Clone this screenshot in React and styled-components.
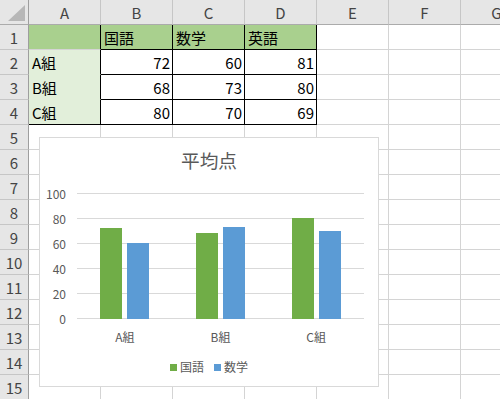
import styled, { createGlobalStyle } from "styled-components";

const GlobalStyle = createGlobalStyle`
  html, body {
    margin: 0;
    padding: 0;
    background: #ffffff;
    overflow: hidden;
  }
  body {
    font-family: "Noto Sans CJK JP", "Noto Sans", sans-serif;
  }
`;

const columns = ["A", "B", "C", "D", "E", "F", "G"];
const rowCount = 15;

const scores = [
  { name: "A組", kokugo: 72, sugaku: 60, eigo: 81 },
  { name: "B組", kokugo: 68, sugaku: 73, eigo: 80 },
  { name: "C組", kokugo: 80, sugaku: 70, eigo: 69 },
];

const GREEN = "#70ad47";
const BLUE = "#5b9bd5";

// what goes in each cell of the table area (row, col index 0 = A)
function cellFor(row, col) {
  const black = "#000000";
  const grid = "#d4d4d4";
  const cell = { text: "", bg: "#ffffff", align: "left", right: grid, bottom: grid };

  if (row === 1 && col <= 3) {
    cell.bg = "#a9d08e";
    cell.text = ["", "国語", "数学", "英語"][col];
    cell.right = black;
    if (col > 0) cell.bottom = black;
  }
  if (row >= 2 && row <= 4 && col <= 3) {
    const s = scores[row - 2];
    if (col === 0) {
      cell.bg = "#e2efda";
      cell.text = s.name;
      cell.right = black;
      cell.bottom = row === 4 ? black : "#e2efda";
    } else {
      cell.text = [s.kokugo, s.sugaku, s.eigo][col - 1];
      cell.align = "right";
      cell.right = black;
      cell.bottom = black;
    }
  }
  return cell;
}

export default function App() {
  const rows = [];
  for (let r = 1; r <= rowCount; r++) {
    rows.push(
      <RowHeader key={`h${r}`}>{r}</RowHeader>
    );
    columns.forEach((c, i) => {
      const cell = cellFor(r, i);
      rows.push(
        <Cell
          key={`${c}${r}`}
          $bg={cell.bg}
          $align={cell.align}
          $right={cell.right}
          $bottom={cell.bottom}
        >
          {cell.text}
        </Cell>
      );
    });
  }

  return (
    <>
      <GlobalStyle />
      <Sheet>
        <Corner />
        {columns.map((c) => (
          <ColumnHeader key={c}>{c}</ColumnHeader>
        ))}
        {rows}

        <Chart>
          <ChartTitle>平均点</ChartTitle>
          <PlotRow>
            <AxisLabels>
              {[100, 80, 60, 40, 20, 0].map((v) => (
                <AxisLabel key={v}>{v}</AxisLabel>
              ))}
            </AxisLabels>
            <PlotArea>
              {scores.map((s) => (
                <BarGroup key={s.name}>
                  <Bar $color={GREEN} style={{ height: s.kokugo * 1.25 + 1 }} />
                  <Bar $color={BLUE} style={{ height: s.sugaku * 1.25 + 1 }} />
                </BarGroup>
              ))}
            </PlotArea>
          </PlotRow>
          <Categories>
            {scores.map((s) => (
              <Category key={s.name}>{s.name}</Category>
            ))}
          </Categories>
          <Legend>
            <LegendItem>
              <Swatch $color={GREEN} />
              国語
            </LegendItem>
            <LegendItem>
              <Swatch $color={BLUE} />
              数学
            </LegendItem>
          </Legend>
        </Chart>
      </Sheet>
    </>
  );
}

const Sheet = styled.div`
  position: relative;
  width: 500px;
  height: 399px;
  overflow: hidden;
  display: grid;
  grid-template-columns: 29px repeat(7, 72px);
  grid-auto-rows: 25px;
  font-size: 15px;
  color: #000000;
`;

const HeaderBase = styled.div`
  box-sizing: border-box;
  background: #e6e6e6;
  color: #444444;
  display: flex;
  align-items: center;
  justify-content: center;
`;

const Corner = styled(HeaderBase)`
  position: relative;
  border-right: 1px solid #9e9e9e;
  border-bottom: 1px solid #ababab;

  &::after {
    content: "";
    position: absolute;
    left: 8px;
    top: 5px;
    width: 17px;
    height: 16px;
    background: #b7b7b7;
    clip-path: polygon(100% 0, 100% 100%, 0 100%);
  }
`;

const ColumnHeader = styled(HeaderBase)`
  border-right: 1px solid #c6c6c6;
  border-bottom: 1px solid #ababab;
`;

const RowHeader = styled(HeaderBase)`
  border-right: 1px solid #9e9e9e;
  border-bottom: 1px solid #c6c6c6;
`;

const Cell = styled.div`
  box-sizing: border-box;
  background: ${(p) => p.$bg};
  border-right: 1px solid ${(p) => p.$right};
  border-bottom: 1px solid ${(p) => p.$bottom};
  display: flex;
  align-items: center;
  justify-content: ${(p) => (p.$align === "right" ? "flex-end" : "flex-start")};
  padding: 0 2px 0 3px;
  white-space: nowrap;
`;

const Chart = styled.div`
  position: absolute;
  left: 39px;
  top: 137px;
  width: 340px;
  height: 250px;
  box-sizing: border-box;
  background: #ffffff;
  border: 1px solid #d9d9d9;
  display: flex;
  flex-direction: column;
  color: #595959;
  font-size: 12px;
`;

const ChartTitle = styled.div`
  margin-top: 10px;
  height: 24px;
  line-height: 24px;
  font-size: 18.67px;
  text-align: center;
`;

const PlotRow = styled.div`
  display: flex;
  margin-top: 21px;
`;

const AxisLabels = styled.div`
  width: 26px;
  margin-right: 11px;
  height: 140px;
  margin-top: -7px;
  margin-bottom: -7px;
  display: flex;
  flex-direction: column;
  justify-content: space-between;
  align-items: flex-end;
`;

const AxisLabel = styled.div`
  height: 15px;
  line-height: 15px;
`;

const PlotArea = styled.div`
  width: 287px;
  height: 126px;
  background: repeating-linear-gradient(
    to bottom,
    #d9d9d9 0 1px,
    transparent 1px 25px
  );
  display: grid;
  grid-template-columns: repeat(3, 1fr);
`;

const BarGroup = styled.div`
  display: flex;
  justify-content: center;
  align-items: flex-end;
  gap: 5px;
`;

const Bar = styled.div`
  width: 22px;
  background: ${(p) => p.$color};
`;

const Categories = styled.div`
  margin-left: 37px;
  margin-top: 10px;
  width: 287px;
  display: grid;
  grid-template-columns: repeat(3, 1fr);
  line-height: 16px;
`;

const Category = styled.div`
  text-align: center;
`;

const Legend = styled.div`
  margin-top: 14px;
  display: flex;
  justify-content: center;
  gap: 10px;
  line-height: 16px;
`;

const LegendItem = styled.div`
  display: flex;
  align-items: center;
  gap: 3px;
`;

const Swatch = styled.span`
  width: 7px;
  height: 7px;
  background: ${(p) => p.$color};
`;
